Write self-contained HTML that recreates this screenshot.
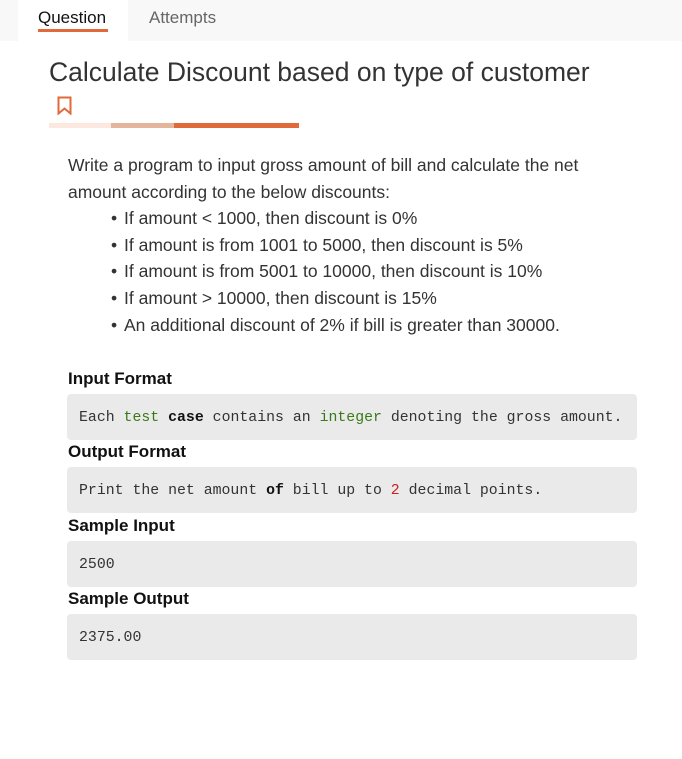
<!DOCTYPE html>
<html><head><style>
body{margin:0;width:682px;height:759px;background:#fff;font-family:"Liberation Sans",sans-serif;position:relative;overflow:hidden;color:#333}
.top{position:absolute;left:0;top:0;width:682px;height:41px;background:#f8f8f8}
.tab{position:absolute;top:0;height:41px;font-size:17px}
.t1{left:18px;width:110px;background:#fff}
.t1 span{position:absolute;left:20px;top:8px;color:#111}
.t1 i{position:absolute;left:20px;top:29px;width:70px;height:3px;background:#e06a3a}
.t2{left:149px;top:8px;color:#666}
h1{position:absolute;left:49px;top:57px;margin:0;font-size:26.5px;font-weight:normal;color:#333;white-space:nowrap}
.bar{position:absolute;top:123px;height:5px}
.p{position:absolute;left:68px;top:152px;font-size:17.5px;line-height:26.6px;color:#333;width:545px}
ul{margin:0;padding-left:56px}
li{list-style:none;position:relative}
li:before{content:"•";position:absolute;left:-13px}
h3{position:absolute;left:68px;margin:0;font-size:17px;font-weight:bold;color:#111}
.code{position:absolute;left:67px;width:570px;height:46px;background:#eaeaea;border-radius:4px;font-family:"Liberation Mono",monospace;font-size:14.85px;line-height:48px;box-sizing:border-box;padding-left:12px;color:#333;white-space:pre}
.g{color:#3a7a1a}.b{font-weight:bold;color:#111}.r{color:#c22}
</style></head><body>
<div class="top"></div>
<div class="tab t1"><span>Question</span><i></i></div>
<div class="tab t2">Attempts</div>
<h1>Calculate Discount based on type of customer</h1>
<svg style="position:absolute;left:56px;top:96px" width="18" height="19" viewBox="0 0 18 19"><path d="M2.5 1.5h12v16l-6-5-6 5z" fill="none" stroke="#e06a3a" stroke-width="2"/></svg>
<div class="bar" style="left:49px;width:62px;background:#fde8df"></div>
<div class="bar" style="left:111px;width:63px;background:#e5b49c"></div>
<div class="bar" style="left:174px;width:125px;background:#e06a3a"></div>
<div class="p">Write a program to input gross amount of bill and calculate the net amount according to the below discounts:
<ul><li>If amount &lt; 1000, then discount is 0%</li><li>If amount is from 1001 to 5000, then discount is 5%</li><li>If amount is from 5001 to 10000, then discount is 10%</li><li>If amount &gt; 10000, then discount is 15%</li><li>An additional discount of 2% if bill is greater than 30000.</li></ul></div>
<h3 style="top:369px">Input Format</h3>
<div class="code" style="top:394px">Each <span class="g">test</span> <span class="b">case</span> contains an <span class="g">integer</span> denoting the gross amount.</div>
<h3 style="top:442px">Output Format</h3>
<div class="code" style="top:467px">Print the net amount <span class="b">of</span> bill up to <span class="r">2</span> decimal points.</div>
<h3 style="top:516px">Sample Input</h3>
<div class="code" style="top:541px">2500</div>
<h3 style="top:589px">Sample Output</h3>
<div class="code" style="top:614px">2375.00</div>
</body></html>
